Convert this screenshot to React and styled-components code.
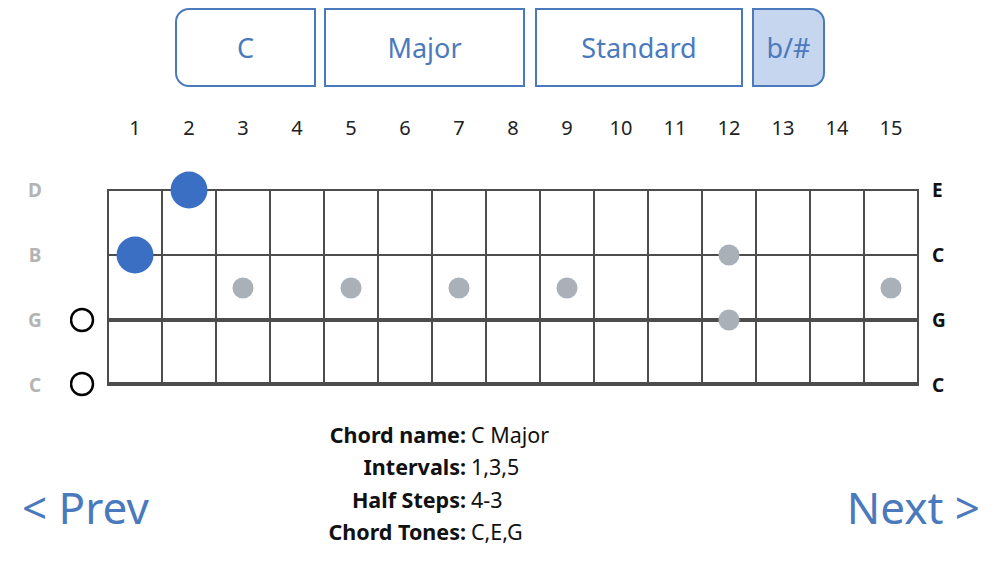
import React from "react";
import styled, { createGlobalStyle } from "styled-components";

const GlobalStyle = createGlobalStyle`
    html, body {
        margin: 0;
        padding: 0;
        background: #ffffff;
    }
    body {
        font-family: "Noto Sans", "Open Sans", sans-serif;
        width: 1000px;
        height: 563px;
        overflow: hidden;
    }
`;

const BLUE = "#4a7abd";
const STRING_Y = [32, 97, 162, 226];
const FRET_X0 = 38;
const FRET_W = 54;
const FRETS = 15;

const Page = styled.div`
    width: 1000px;
    height: 563px;
    display: flex;
    flex-direction: column;
`;

const Toolbar = styled.div`
    display: flex;
    justify-content: center;
    gap: 8px;
    padding-top: 8px;
    height: 79px;
`;

const Picker = styled.button`
    width: ${props => props.$w}px;
    height: 79px;
    box-sizing: border-box;
    border: 2.5px solid ${BLUE};
    border-radius: ${props => props.$radius};
    background: ${props => (props.$active ? "#c6d6ee" : "#ffffff")};
    color: ${BLUE};
    font-family: inherit;
    font-size: 27px;
    padding: 0;
    margin-left: ${props => props.$shift || 0}px;
`;

const FretNumbers = styled.div`
    display: flex;
    padding-left: 108px;
    height: 54px;
    margin-top: 13px;
    align-items: center;
`;

const FretNumber = styled.span`
    width: ${FRET_W}px;
    text-align: center;
    font-size: 20px;
    color: #222;
`;

const Board = styled.div`
    display: flex;
    height: 260px;
    margin-top: 4px;
`;

const StringNames = styled.div`
    width: 70px;
    display: flex;
    flex-direction: column;
`;

const StringName = styled.span`
    height: 65px;
    line-height: 65px;
    font-size: 19px;
    font-weight: 700;
    color: ${props => (props.$muted ? "#b4b4b4" : "#111")};
    text-align: ${props => (props.$muted ? "center" : "left")};
    padding-left: ${props => (props.$muted ? 0 : 2)}px;
`;

const Neck = styled.svg`
    width: 860px;
    height: 260px;
    display: block;
`;

const Bottom = styled.div`
    display: grid;
    grid-template-columns: 300px 1fr 300px;
    align-items: end;
`;

const NavLink = styled.span`
    font-size: 44px;
    color: ${BLUE};
    justify-self: ${props => (props.$right ? "end" : "start")};
    padding: 0 ${props => (props.$right ? 20 : 0)}px 11px ${props => (props.$right ? 0 : 22)}px;
`;

const Info = styled.div`
    display: grid;
    grid-template-columns: 166px auto;
    column-gap: 5px;
    grid-auto-rows: 32.5px;
    align-items: center;
    font-size: 21.5px;
    color: #111;
`;

const InfoLabel = styled.span`
    font-weight: 700;
    text-align: right;
`;

const InfoValue = styled.span``;

const fretCenter = f => FRET_X0 + FRET_W * (f - 0.5);

const markers = [
    { f: 3, y: 130 },
    { f: 5, y: 130 },
    { f: 7, y: 130 },
    { f: 9, y: 130 },
    { f: 15, y: 130 },
    { f: 12, y: STRING_Y[1] },
    { f: 12, y: STRING_Y[2] },
];

const notes = [
    { f: 1, s: 1 },
    { f: 2, s: 0 },
];

const Fretboard = () => (
    <Neck viewBox="0 0 860 260">
        {Array.from({ length: FRETS + 1 }, (_, i) => (
            <line
                key={"f" + i}
                x1={FRET_X0 + FRET_W * i}
                x2={FRET_X0 + FRET_W * i}
                y1={STRING_Y[0]}
                y2={STRING_Y[3]}
                stroke="#4d4d4d"
                strokeWidth="2"
            />
        ))}
        {STRING_Y.map((y, i) => (
            <line
                key={"s" + i}
                x1={FRET_X0 - 1}
                x2={FRET_X0 + FRET_W * FRETS + 1}
                y1={y}
                y2={y}
                stroke="#4d4d4d"
                strokeWidth={i > 1 ? 4 : 2}
            />
        ))}
        {markers.map((m, i) => (
            <circle key={"m" + i} cx={fretCenter(m.f)} cy={m.y} r="10.5" fill="#a9b0b7" />
        ))}
        {notes.map((n, i) => (
            <circle key={"n" + i} cx={fretCenter(n.f)} cy={STRING_Y[n.s]} r="18.5" fill="#3a6fc3" />
        ))}
        <circle cx="12" cy={STRING_Y[2]} r="11" fill="none" stroke="#000" strokeWidth="2.5" />
        <circle cx="12" cy={STRING_Y[3]} r="11" fill="none" stroke="#000" strokeWidth="2.5" />
    </Neck>
);

const info = [
    ["Chord name:", "C Major"],
    ["Intervals:", "1,3,5"],
    ["Half Steps:", "4-3"],
    ["Chord Tones:", "C,E,G"],
];

const App = () => {
    return (
        <Page>
            <GlobalStyle />
            <Toolbar>
                <Picker $w={141} $radius="14px 0 0 14px">C</Picker>
                <Picker $w={201} $radius="0">Major</Picker>
                <Picker $w={208} $radius="0" $shift={2}>Standard</Picker>
                <Picker $w={73} $radius="0 14px 14px 0" $active $shift={1}>b/#</Picker>
            </Toolbar>
            <FretNumbers>
                {Array.from({ length: FRETS }, (_, i) => (
                    <FretNumber key={i}>{i + 1}</FretNumber>
                ))}
            </FretNumbers>
            <Board>
                <StringNames>
                    {["D", "B", "G", "C"].map(n => (
                        <StringName key={n} $muted>{n}</StringName>
                    ))}
                </StringNames>
                <Fretboard />
                <StringNames>
                    {["E", "C", "G", "C"].map((n, i) => (
                        <StringName key={i}>{n}</StringName>
                    ))}
                </StringNames>
            </Board>
            <Bottom>
                <NavLink>&lt; Prev</NavLink>
                <Info>
                    {info.map(([k, v]) => (
                        <React.Fragment key={k}>
                            <InfoLabel>{k}</InfoLabel>
                            <InfoValue>{v}</InfoValue>
                        </React.Fragment>
                    ))}
                </Info>
                <NavLink $right>Next &gt;</NavLink>
            </Bottom>
        </Page>
    );
};

export default App;
